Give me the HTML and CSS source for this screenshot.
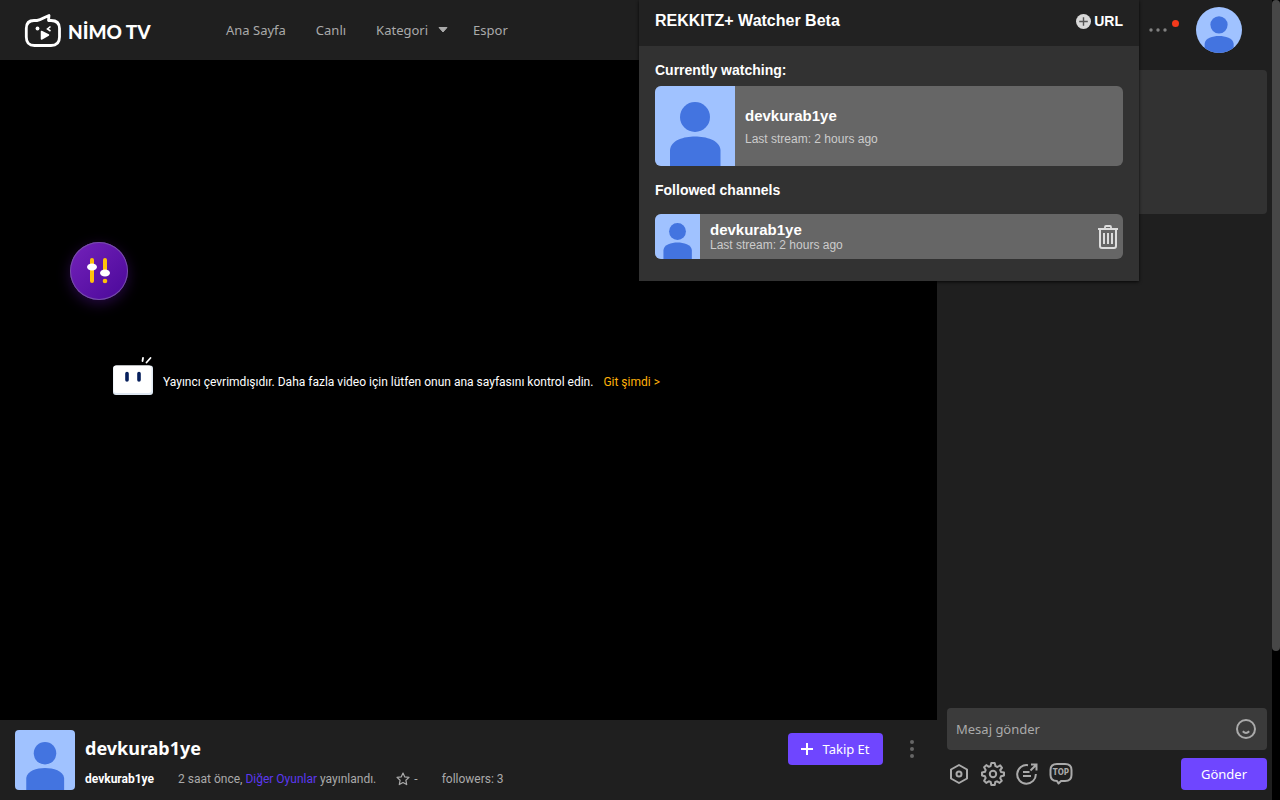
FILE: index.html
```html
<!DOCTYPE html>
<html lang="tr">
<head>
<meta charset="utf-8">
<title>devkurab1ye - Nimo TV</title>
<meta name="viewport" content="width=device-width, initial-scale=1">
<link rel="stylesheet" href="styles.css">
</head>
<body>
<svg class="symbols" aria-hidden="true">
  <symbol id="avatar" viewBox="0 0 80 80">
    <rect width="80" height="80" fill="#a0c2ff"/>
    <circle cx="40" cy="31" r="15" fill="#4374e0"/>
    <path d="M15 80V64C16 54 29 50.500 40 50.500S64.500 54 65.500 64V80Z" fill="#4374e0"/>
  </symbol>
</svg>
<div class="page">
  <header class="topbar">
    <a class="logo" href="#">
      <svg class="logo-mark" viewBox="0 0 38 36" aria-hidden="true">
        <path d="M10 8.500 H13 C17 8 20 5.500 25 3.500 L24.500 8.500 H27 Q35.500 8.500 35.500 16.500 V25 Q35.500 33.500 27 33.500 H10.500 Q2.300 33.500 2.300 25 V16.500 Q2.300 8.500 10 8.500Z" fill="none" stroke="#fff" stroke-width="2.800" stroke-linejoin="round"/>
        <circle cx="13.500" cy="16.500" r="1.900" fill="#fff"/>
        <path d="M26.500 14.500L23.500 17L26.500 19" fill="none" stroke="#fff" stroke-width="1.600"/>
        <path d="M17.500 19.500L24.500 23L17.500 27Z" fill="#fff" stroke="#fff" stroke-width="1.500" stroke-linejoin="round"/>
      </svg>
      <span class="logo-text">NİMO TV</span>
    </a>
    <nav class="nav">
      <a href="#">Ana Sayfa</a>
      <a href="#">Canlı</a>
      <a href="#" class="nav-drop">Kategori
        <svg width="10" height="6" viewBox="0 0 10 6" aria-hidden="true"><path d="M1 .5H9L5 5Z" fill="#aaa" stroke="#aaa" stroke-linejoin="round"/></svg>
      </a>
      <a href="#">Espor</a>
    </nav>
    <div class="account">
      <button class="icon-btn more" aria-label="Daha fazla">
        <svg width="20" height="6" viewBox="0 0 20 6"><g fill="#818181"><circle cx="3" cy="3" r="1.700"/><circle cx="10" cy="3" r="1.700"/><circle cx="17" cy="3" r="1.700"/></g></svg>
        <span class="dot"></span>
      </button>
      <button class="icon-btn me" aria-label="Profil"><svg width="46" height="46"><use href="#avatar"/></svg></button>
    </div>
  </header>

  <main class="content">
    <section class="stream">
      <div class="player">
        <button class="icon-btn fab" aria-label="Ayarlar">
          <svg width="58" height="58" viewBox="0 0 58 58">
            <path d="M22 18V39" stroke="#ffc20a" stroke-width="4" stroke-linecap="round"/>
            <path d="M35 18V31" stroke="#ffc20a" stroke-width="4" stroke-linecap="round"/>
            <circle cx="35" cy="39" r="2.300" fill="#ffc20a"/>
            <ellipse cx="22" cy="25" rx="5" ry="3.500" fill="#fff"/>
            <ellipse cx="35" cy="31" rx="5" ry="3.500" fill="#fff"/>
          </svg>
        </button>
        <div class="offline">
          <svg width="40" height="40" viewBox="0 0 40 40" aria-hidden="true">
            <rect x="0" y="9.500" width="40" height="29.500" rx="3" fill="#dfe8f2"/>
            <rect x="0.500" y="9.500" width="38" height="27.500" rx="3" fill="#fff"/>
            <path d="M14 17.500V24M26 17.500V24" stroke="#061f5c" stroke-width="3.600" stroke-linecap="round"/>
            <path d="M30 2L29.500 5M37.500 2L33.500 6.500" stroke="#fff" stroke-width="1.800" stroke-linecap="round"/>
          </svg>
          <p>Yayıncı çevrimdışıdır. Daha fazla video için lütfen onun ana sayfasını kontrol edin.</p>
          <a href="#">Git şimdi &gt;</a>
        </div>
      </div>
      <div class="info">
        <svg class="info-avatar" width="60" height="60" aria-hidden="true"><use href="#avatar"/></svg>
        <div class="info-text">
          <h1>devkurab1ye</h1>
          <div class="meta">
            <strong>devkurab1ye</strong>
            <span>2 saat önce, <a href="#">Diğer Oyunlar</a> yayınlandı.</span>
            <span class="stars"><svg width="14" height="14" viewBox="0 0 14 14" aria-hidden="true"><path d="M7 1L8.800 4.900L13 5.400L9.900 8.300L10.700 12.600L7 10.500L3.300 12.600L4.100 8.300L1 5.400L5.200 4.900Z" fill="none" stroke="#aaa" stroke-width="1.200" stroke-linejoin="round"/></svg>-</span>
            <span>followers: 3</span>
          </div>
        </div>
        <div class="actions">
          <button class="primary follow"><svg width="12" height="12" viewBox="0 0 12 12" aria-hidden="true"><path d="M6 0V12M0 6H12" stroke="#fff" stroke-width="2"/></svg>Takip Et</button>
          <button class="icon-btn" aria-label="Seçenekler"><svg width="6" height="20" viewBox="0 0 6 20"><g fill="#666"><circle cx="3" cy="3" r="2"/><circle cx="3" cy="10" r="2"/><circle cx="3" cy="17" r="2"/></g></svg></button>
        </div>
      </div>
    </section>

    <aside class="chat">
      <div class="chat-card"></div>
      <form class="composer">
        <div class="message">
          <input type="text" placeholder="Mesaj gönder" aria-label="Mesaj gönder">
          <button type="button" class="icon-btn" aria-label="Emoji"><svg width="20" height="20" viewBox="0 0 20 20" fill="none" stroke="#aaa" stroke-width="2"><circle cx="10" cy="10" r="9"/><path d="M6.800 12.300Q10 15.500 13.200 12.300"/></svg></button>
        </div>
        <div class="tools">
          <button type="button" class="icon-btn" aria-label="Rozet"><svg width="24" height="24" viewBox="0 0 24 24" fill="none" stroke="#aaa" stroke-width="2" stroke-linejoin="round"><path d="M12 3L20 7.500V16.500L12 21L4 16.500V7.500Z"/><circle cx="12" cy="12" r="2.500"/></svg></button>
          <button type="button" class="icon-btn" aria-label="Sohbet ayarları"><svg width="24" height="24" viewBox="0 0 24 24" fill="none" stroke="#aaa" stroke-width="2" stroke-linejoin="round"><path d="M10.300 1H13.700L14.500 4.200L16.400 5L19.200 3.300L21 5.800L19.200 8L20 9.900L23 10.500V13.500L20 14.300L19.200 16.200L20.800 18.800L18.600 20.900L16 19.300L14.300 20L13.700 23H10.300L9.700 20L7.800 19.300L5.200 20.900L3.100 18.700L4.700 16.100L4 14.300L1 13.500V10.500L4 9.800L4.700 7.900L3.100 5.200L5.300 3.100L7.900 4.800L9.600 4.100Z"/><circle cx="12" cy="12" r="3.200"/></svg></button>
          <button type="button" class="icon-btn" aria-label="Görev"><svg width="24" height="24" viewBox="0 0 24 24" fill="none" stroke="#aaa" stroke-width="2"><path d="M13 3.200A9.300 9.300 0 1 0 20.800 12M8 10H14.500M8 14H16M15.500 8.500L21 3M16 2.500H21.500V8.500"/></svg></button>
          <button type="button" class="icon-btn top" aria-label="TOP"><svg width="24" height="24" viewBox="0 0 24 24" fill="none" stroke="#aaa" stroke-width="2"><path d="M8 2H16Q22.500 2 22.500 8V13Q22.500 19 16 19H12L9.500 21.500L8 19Q1.500 19 1.500 13V8Q1.500 2 8 2Z" stroke-linejoin="round"/></svg><span>TOP</span></button>
          <button type="button" class="primary send">Gönder</button>
        </div>
      </form>
    </aside>
  </main>
</div>
<div class="scroll-track" aria-hidden="true"><div class="scroll-thumb"></div></div>

<div class="popup" role="dialog" aria-label="REKKITZ+ Watcher Beta">
  <div class="popup-head">
    <h2>REKKITZ+ Watcher Beta</h2>
    <button class="icon-btn add"><svg width="15" height="15" viewBox="0 0 14 14" aria-hidden="true"><circle cx="7" cy="7" r="7" fill="#d9d9d9"/><path d="M7 3V11M3 7H11" stroke="#555" stroke-width="1.300"/></svg>URL</button>
  </div>
  <div class="popup-body">
    <h3>Currently watching:</h3>
    <div class="channel big">
      <svg width="80" height="80" aria-hidden="true"><use href="#avatar"/></svg>
      <div class="channel-text"><b>devkurab1ye</b><span>Last stream: 2 hours ago</span></div>
    </div>
    <h3 class="followed">Followed channels</h3>
    <div class="channel">
      <svg width="45" height="45" aria-hidden="true"><use href="#avatar"/></svg>
      <div class="channel-text"><b>devkurab1ye</b><span>Last stream: 2 hours ago</span></div>
      <button class="icon-btn trash" aria-label="Delete"><svg width="20" height="24" viewBox="0 0 20 24" fill="none" stroke="#ddd"><path d="M0 4H20" stroke-width="2"/><path d="M7 3.500V2Q7 1 8 1H12Q13 1 13 2V3.500" stroke-width="1.800"/><path d="M2 4V21Q2 23 4 23H16Q18 23 18 21V4" stroke-width="2"/><path d="M6 8V19M10 8V19M14 8V19" stroke-width="2"/></svg></button>
    </div>
  </div>
</div>
</body>
</html>
```

FILE: styles.css
```css
* { box-sizing: border-box; }
body {
  margin: 0;
  min-height: 100vh;
  display: flex;
  position: relative;
  background: #000;
  color: #aaa;
  font-family: "Segoe UI", "Noto Sans", "Open Sans", sans-serif;
  font-size: 13px;
}
h1, h2, h3, p { margin: 0; }
a { color: inherit; text-decoration: none; }
button, input { font: inherit; border: 0; }
button { cursor: pointer; }
svg { display: block; flex-shrink: 0; }
.symbols { position: absolute; width: 0; height: 0; }
.icon-btn { display: flex; align-items: center; padding: 0; background: none; color: inherit; }
.primary { display: flex; align-items: center; justify-content: center; height: 32px; background: #6f46ff; color: #fff; border-radius: 4px; }

.page { flex: 1; min-width: 0; display: flex; flex-direction: column; }

.topbar { display: flex; align-items: center; height: 60px; padding: 0 30px 0 24px; background: #1f1f1f; }
.logo { display: flex; align-items: center; gap: 6px; width: 202px; color: #fff; }
.logo-mark { width: 38px; height: 36px; }
.logo-text { padding-top: 4px; font: 900 19px/24px Lato, sans-serif; white-space: nowrap; }
.nav { display: flex; gap: 30px; color: #aaa; }
.nav-drop { display: flex; align-items: center; gap: 10px; margin-right: -5px; }
.account { display: flex; align-items: center; gap: 28px; margin-left: auto; }
.more { position: relative; }
.dot { position: absolute; top: -7px; right: -11px; width: 7px; height: 7px; border-radius: 50%; background: #f43a1c; }
.me svg { border-radius: 50%; }

.content { flex: 1; display: flex; }
.stream { flex: 1; min-width: 0; display: flex; flex-direction: column; }
.player { flex: 1; position: relative; display: flex; align-items: center; padding: 0 20px 28px 113px; background: #000; }
.fab {
  position: absolute;
  top: 182px;
  left: 70px;
  border-radius: 50%;
  background: linear-gradient(135deg, #7422ba, #4a0899);
  box-shadow: inset 0 0 0 1px #7750a8, 0 4px 14px #46107a88;
}
.offline { display: flex; align-items: center; gap: 10px; color: #fff; font-family: "Segoe UI", Roboto, sans-serif; font-size: 12px; }
.offline p, .offline a { padding-top: 12px; white-space: nowrap; }
.offline a { color: #ffb10a; }

.info { display: flex; align-items: center; gap: 10px; height: 80px; padding: 0 22px 0 15px; background: #1f1f1f; }
.info-avatar { border-radius: 4px; }
.info-text { flex: 1; min-width: 0; display: flex; flex-direction: column; gap: 10px; padding-top: 4px; }
.info h1 { color: #fff; font-size: 18px; line-height: 24px; font-weight: 700; }
.meta { display: flex; align-items: center; gap: 20px; font-family: "Segoe UI", Roboto, sans-serif; font-size: 12px; line-height: 18px; white-space: nowrap; }
.meta strong { margin-right: 4px; color: #fff; }
.meta a { color: #5c38f0; }
.stars { display: flex; align-items: center; gap: 4px; margin-right: 4px; }
.actions { display: flex; align-items: center; align-self: flex-start; gap: 26px; margin-top: 13px; }
.follow { width: 95px; padding: 0; gap: 9px; }

.chat { width: 335px; flex-shrink: 0; display: flex; flex-direction: column; justify-content: space-between; padding: 10px 5px 10px 10px; background: #1f1f1f; }
.chat-card { height: 144px; border-radius: 4px; background: #323232; }
.composer { display: flex; flex-direction: column; gap: 8px; margin: 0; }
.message { display: flex; align-items: center; height: 42px; padding: 0 11px 0 9px; border-radius: 4px; background: #3b3b3b; }
.message input { flex: 1; min-width: 0; padding: 0; background: none; color: #aaa; outline: 0; }
.message input::placeholder { color: #aaa; opacity: 1; }
.tools { display: flex; align-items: center; gap: 10px; }
.top { position: relative; }
.top span { position: absolute; top: 5px; left: 0; width: 24px; text-align: center; font: 700 8px/12px "DejaVu Sans Condensed", "Liberation Sans", sans-serif; }
.send { width: 86px; margin-left: auto; padding: 0; }

.scroll-track { width: 8px; background: #000; }
.scroll-thumb { height: 81.4vh; border-radius: 4px; background: #474747; }

.popup {
  position: absolute;
  top: 0;
  right: 141px;
  width: 500px;
  background: #323232;
  color: #fff;
  font-family: Arial, "Liberation Sans", sans-serif;
  box-shadow: 0 1px 3px #000c;
}
.popup-head { display: flex; align-items: center; justify-content: space-between; height: 46px; padding: 0 16px 4px; background: #222; }
.popup h2 { font-size: 16px; line-height: 20px; }
.add { gap: 3px; font-size: 14px; font-weight: 700; }
.popup-body { padding: 16px 16px 22px; }
.popup h3 { font-size: 14px; line-height: 16px; }
.channel { display: flex; align-items: center; gap: 10px; overflow: hidden; border-radius: 6px; background: #666; }
.channel.big { margin: 8px 0 16px; }
.followed { margin-bottom: 16px; }
.channel-text { flex: 1; display: flex; flex-direction: column; }
.channel b { font-size: 15px; line-height: 16px; }
.channel span { color: #ccc; font-size: 12px; line-height: 14px; }
.big .channel-text { gap: 8px; padding-top: 2px; }
.trash { margin-right: 5px; }
```
